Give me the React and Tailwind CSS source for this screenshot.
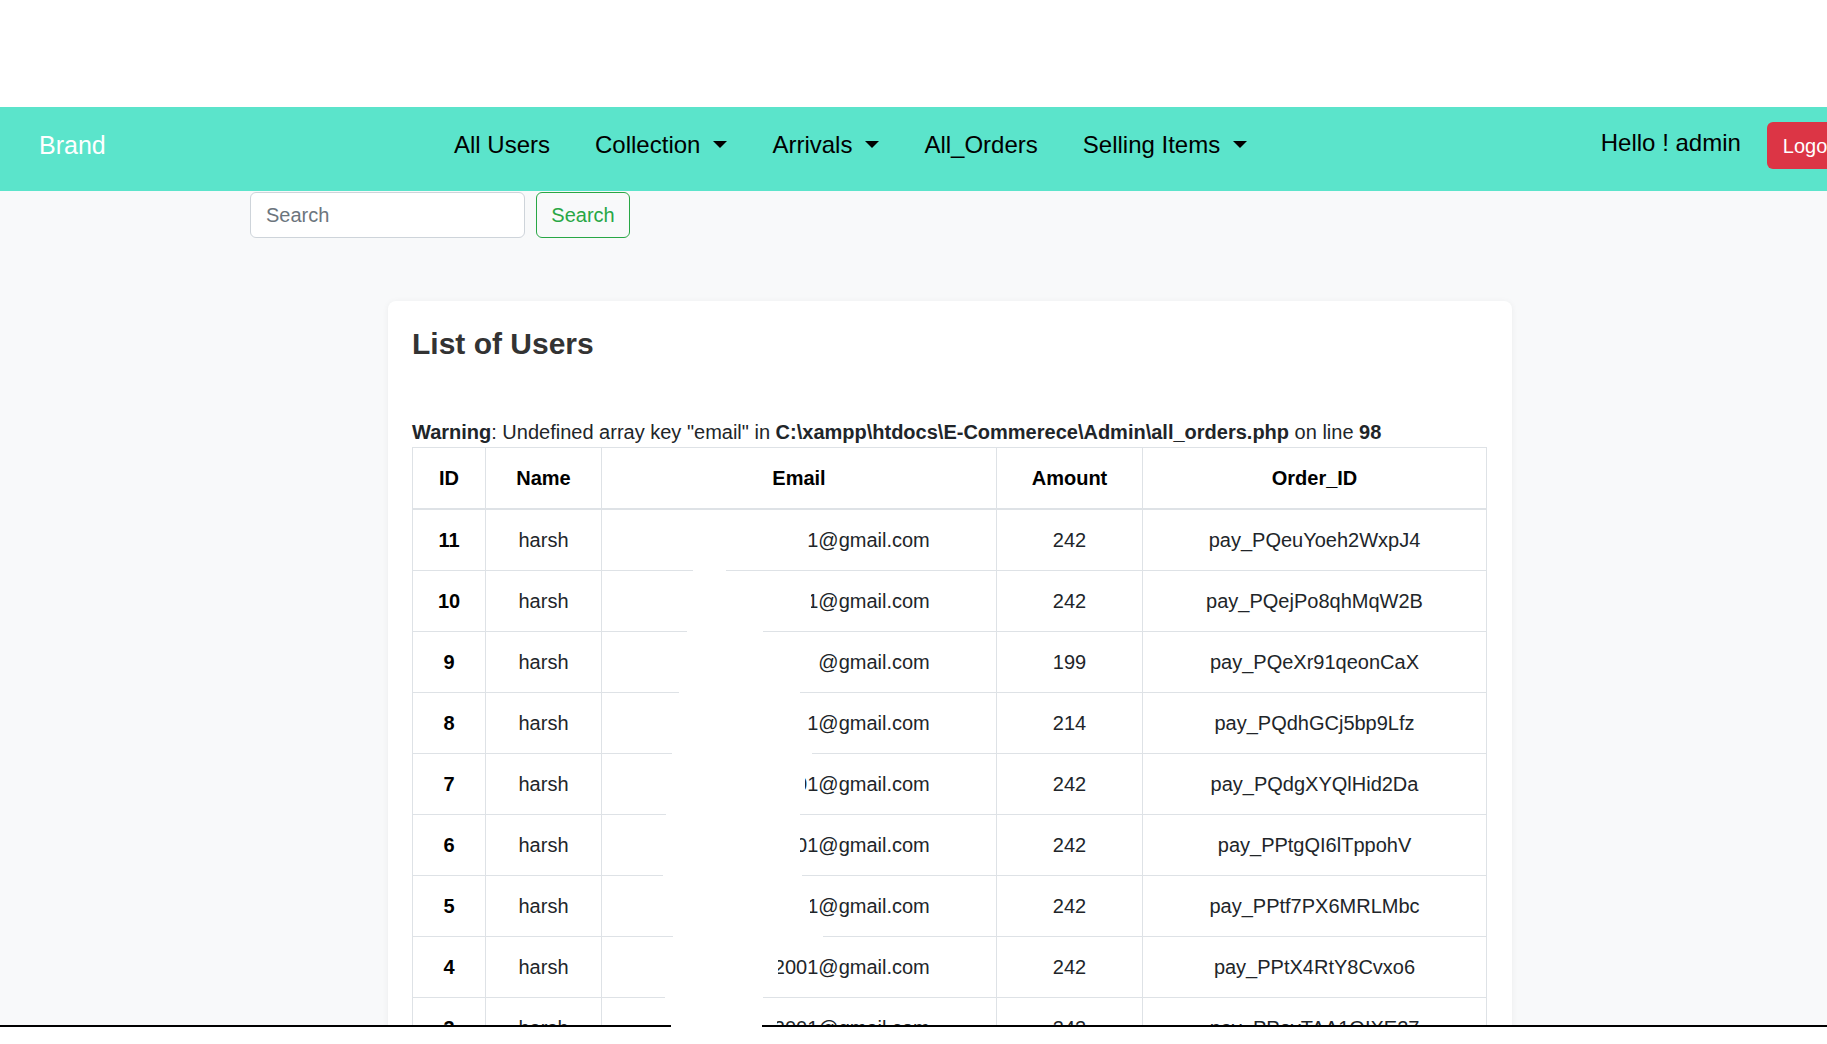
import React from 'react'

const orders = [
  { id: 11, amount: 242, payId: 'pay_PQeuYoeh2WxpJ4', cut: 806, gap: [692, 725] },
  { id: 10, amount: 242, payId: 'pay_PQejPo8qhMqW2B', cut: 810, gap: [686, 762] },
  { id: 9, amount: 199, payId: 'pay_PQeXr91qeonCaX', cut: 818, gap: [678, 799] },
  { id: 8, amount: 214, payId: 'pay_PQdhGCj5bp9Lfz', cut: 806, gap: [671, 811] },
  { id: 7, amount: 242, payId: 'pay_PQdgXYQlHid2Da', cut: 804, gap: [665, 799] },
  { id: 6, amount: 242, payId: 'pay_PPtgQI6lTppohV', cut: 799, gap: [662, 801] },
  { id: 5, amount: 242, payId: 'pay_PPtf7PX6MRLMbc', cut: 809, gap: [672, 822] },
  { id: 4, amount: 242, payId: 'pay_PPtX4RtY8Cvxo6', cut: 777, gap: [664, 762] },
  { id: 3, amount: 242, payId: 'pay_PPeyTAA1QIXE27', cut: 776, gap: null },
]

// page x of the email column's left edge
const EMAIL_COL_X = 601

function Caret() {
  return (
    <span className="ml-[13px] inline-block h-0 w-0 border-x-[7px] border-t-[7px] border-x-transparent border-t-black" />
  )
}

function NavLink({ children, dropdown }) {
  return (
    <a href="#" className="flex items-center text-[24px] leading-[36px] text-black">
      {children}
      {dropdown && <Caret />}
    </a>
  )
}

export default function App() {
  return (
    <div className="relative h-[1044px] w-full overflow-hidden bg-white font-['Liberation_Sans',Arial,sans-serif] text-[#212529]">
      <div className="h-[107px] bg-white" />

      <nav className="flex h-[84px] items-center overflow-visible bg-[#5be4cb] pb-[9px] pl-[39px]">
        <a href="#" className="w-[415px] shrink-0 text-[25px] leading-[36px] text-white">
          Brand
        </a>
        <div className="flex items-center gap-[45px]">
          <NavLink>All Users</NavLink>
          <NavLink dropdown>Collection</NavLink>
          <NavLink dropdown>Arrivals</NavLink>
          <NavLink>All_Orders</NavLink>
          <NavLink dropdown>Selling Items</NavLink>
        </div>
        <div className="ml-auto mr-[-33px] flex shrink-0 items-center gap-[26px]">
          <span className="mb-[3px] text-[24px] leading-[36px] text-black">Hello ! admin</span>
          <button className="mt-[2px] h-[47px] rounded-[6px] bg-[#dc3545] px-[16px] text-[20px] leading-[30px] text-white">
            Logout
          </button>
        </div>
      </nav>

      <main className="h-[834px] overflow-hidden bg-[#f8f9fa]">
        <form className="flex gap-[11px] pl-[250px] pt-px">
          <input
            type="text"
            placeholder="Search"
            className="h-[46px] w-[275px] rounded-[6px] border border-[#ced4da] bg-white px-[15px] text-[20px] text-[#212529] placeholder:text-[#6c757d]"
          />
          <button
            type="button"
            className="h-[46px] w-[94px] rounded-[6px] border border-[#28a745] text-[20px] text-[#28a745]"
          >
            Search
          </button>
        </form>

        <section className="ml-[388px] mt-[63px] w-[1124px] rounded-[8px] bg-white px-[24px] pt-[25px] shadow-[0_1px_6px_rgba(0,0,0,0.06)]">
          <h2 className="text-[30px] font-bold leading-[35px] text-[#333]">List of Users</h2>

          <p className="mt-[56px] text-[20px] leading-[30px]">
            <b>Warning</b>: Undefined array key "email" in{' '}
            <b>C:\xampp\htdocs\E-Commerece\Admin\all_orders.php</b> on line <b>98</b>
          </p>

          <table className="w-[1074px] table-fixed border-collapse text-center text-[20px] leading-[30px]">
            <thead>
              <tr className="border-b-2 border-[#dee2e6]">
                <th className="w-[73px] border border-[#dee2e6] py-[15px] font-bold text-black">ID</th>
                <th className="w-[116px] border border-[#dee2e6] py-[15px] font-bold text-black">Name</th>
                <th className="w-[395px] border border-[#dee2e6] py-[15px] font-bold text-black">Email</th>
                <th className="w-[146px] border border-[#dee2e6] py-[15px] font-bold text-black">Amount</th>
                <th className="w-[344px] border border-[#dee2e6] py-[15px] font-bold text-black">Order_ID</th>
              </tr>
            </thead>
            <tbody>
              {orders.map((o) => (
                <tr key={o.id}>
                  <td className="border border-[#dee2e6] py-[15px] font-bold text-black">{o.id}</td>
                  <td className="border border-[#dee2e6] py-[15px]">harsh</td>
                  <td className="relative border border-[#dee2e6] py-[15px]">
                    harshkumar2001@gmail.com
                    <span
                      className="absolute bottom-[3px] top-[3px] bg-white"
                      style={{ left: 19, width: o.cut - EMAIL_COL_X - 19 }}
                    />
                    {o.gap && (
                      <span
                        className="absolute bottom-[-2px] z-10 h-[3px] bg-white"
                        style={{ left: o.gap[0] - EMAIL_COL_X, width: o.gap[1] - o.gap[0] }}
                      />
                    )}
                  </td>
                  <td className="border border-[#dee2e6] py-[15px]">{o.amount}</td>
                  <td className="border border-[#dee2e6] py-[15px]">{o.payId}</td>
                </tr>
              ))}
            </tbody>
          </table>
        </section>
      </main>

      <div className="flex h-[2px]">
        <div className="w-[671px] bg-black" />
        <div className="w-[91px] bg-white" />
        <div className="flex-1 bg-black" />
      </div>
      <div className="h-[17px] bg-white" />
    </div>
  )
}
